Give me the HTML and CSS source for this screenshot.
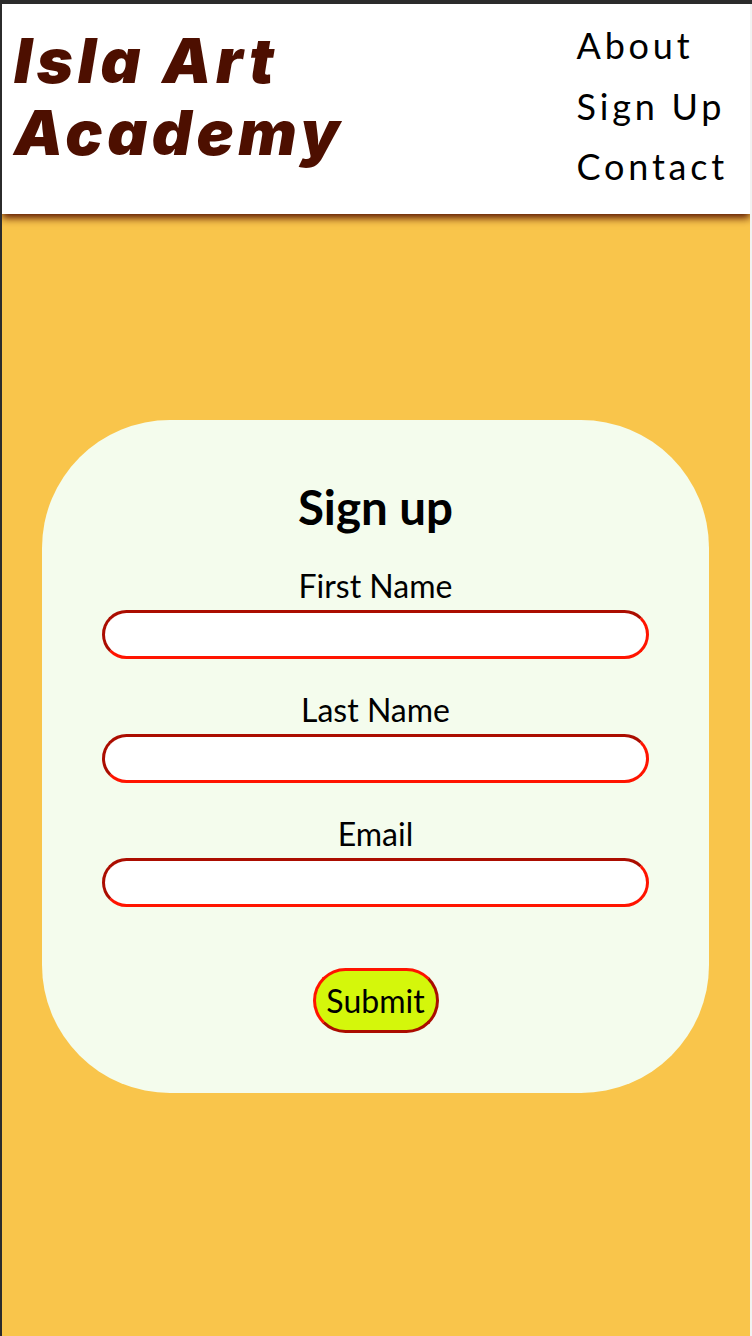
FILE: index.html
```html
<!DOCTYPE html>
<html lang="en">
<head>
<meta charset="utf-8">
<title>Isla Art Academy - Sign up</title>
<link rel="stylesheet" href="styles.css">
</head>
<body>
<div class="frame">
  <header class="site-header">
    <h1 class="logo">Isla Art<br>Academy</h1>
    <nav class="nav">
      <a href="#">About</a>
      <a href="#">Sign Up</a>
      <a href="#">Contact</a>
    </nav>
  </header>
  <main class="main">
    <form class="card">
      <h2 class="card-title">Sign up</h2>
      <div class="field">
        <label for="fn">First Name</label>
        <input id="fn" type="text">
      </div>
      <div class="field">
        <label for="ln">Last Name</label>
        <input id="ln" type="text">
      </div>
      <div class="field">
        <label for="em">Email</label>
        <input id="em" type="email">
      </div>
      <button type="button" class="submit">Submit</button>
    </form>
  </main>
</div>
</body>
</html>
```

FILE: styles.css
```css
html, body {
  margin: 0;
  padding: 0;
}
body {
  background: #2b2b2b;
  font-family: Lato, "Noto Sans", sans-serif;
}
.frame {
  margin: 4px 0 0 2px;
  border-right: 2px solid #f2f2f2;
  background: #f9c54b;
  min-height: 1332px;
  overflow: hidden;
}
.site-header {
  height: 210px;
  box-sizing: border-box;
  background: #ffffff;
  display: flex;
  justify-content: space-between;
  align-items: flex-start;
  padding: 0 22px 0 12px;
  box-shadow: 0 4px 8px #5a1500;
  position: relative;
}
.logo {
  margin: 21px 0 0 0;
  font-family: Inter, "Open Sans", sans-serif;
  font-weight: 900;
  font-style: italic;
  font-size: 62px;
  line-height: 72px;
  letter-spacing: 4.6px;
  color: #4d0f00;
}
.nav {
  display: flex;
  flex-direction: column;
  margin-top: 11px;
}
.nav a {
  color: #000000;
  text-decoration: none;
  font-size: 36px;
  line-height: 60.5px;
  letter-spacing: 3.8px;
}
.main {
  padding: 206px 0 60px;
}
.card {
  width: 667px;
  box-sizing: border-box;
  margin: 0 0 0 40px;
  background: #f4fced;
  border-radius: 128px;
  padding: 58px 60px 60px;
  display: flex;
  flex-direction: column;
  align-items: center;
}
.card-title {
  margin: 0 0 32px;
  font-size: 47.5px;
  font-weight: 700;
  line-height: 57px;
  color: #000000;
}
.field {
  width: 100%;
  display: flex;
  flex-direction: column;
  align-items: center;
  margin-bottom: 32px;
}
.field:last-of-type {
  margin-bottom: 61px;
}
.field label {
  font-size: 32px;
  line-height: 38px;
  color: #000000;
  margin-bottom: 5px;
}
.field input {
  width: 100%;
  height: 49px;
  box-sizing: border-box;
  border: 3px inset #ff1400;
  border-radius: 25px;
  background: #ffffff;
  padding: 0 20px;
  font-family: Lato, sans-serif;
  font-size: 24px;
}
.submit {
  width: 126px;
  height: 65px;
  box-sizing: border-box;
  border: 3px outset #ff1400;
  border-radius: 33px;
  background: #d4f70b;
  font-family: Lato, sans-serif;
  font-size: 32px;
  color: #000000;
  padding: 0;
}
```
